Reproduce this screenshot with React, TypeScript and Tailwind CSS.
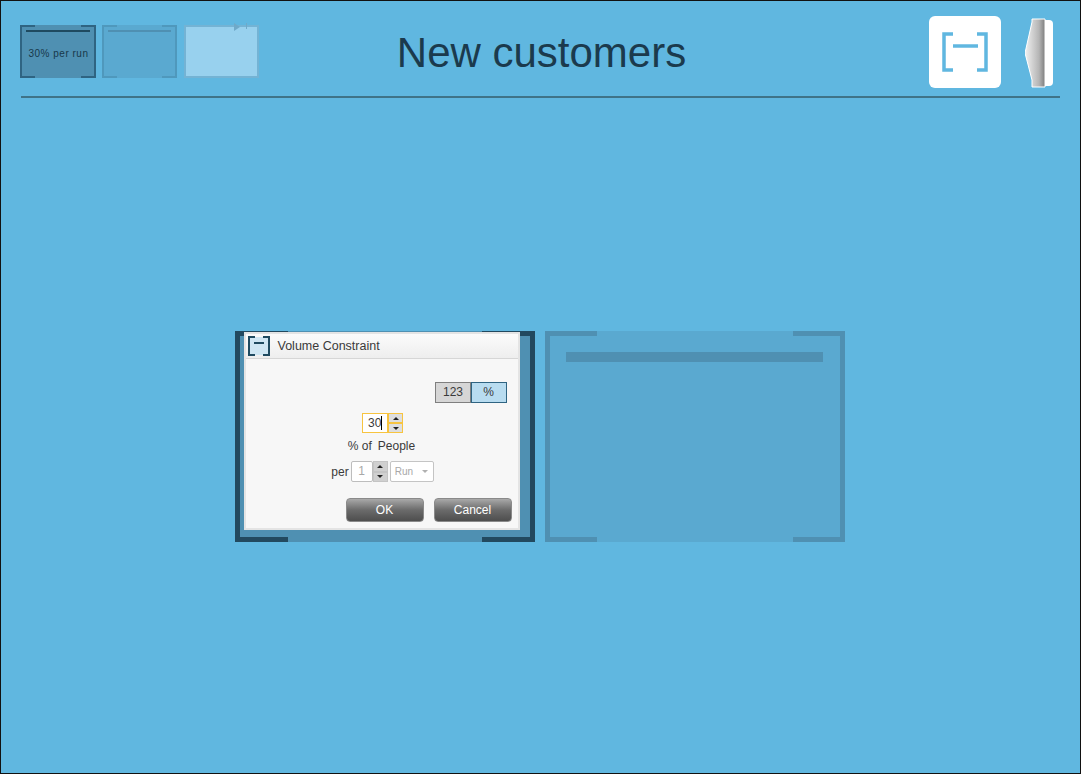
const sans = { fontFamily: '"Liberation Sans", Arial, sans-serif' };

function Bracket({ bar, sideW, cornerW, barClass }: { bar: string; sideW: string; cornerW: string; barClass: string }) {
  return (
    <>
      <div className={`absolute left-0 top-0 ${cornerW} ${sideW} ${bar}`} />
      <div className={`absolute right-0 top-0 ${cornerW} ${sideW} ${bar}`} />
      <div className={`absolute left-0 bottom-0 ${cornerW} ${sideW} ${bar}`} />
      <div className={`absolute right-0 bottom-0 ${cornerW} ${sideW} ${bar}`} />
      <div className={barClass} />
    </>
  );
}

function Thumb({ active }: { active?: boolean }) {
  return (
    <div
      className={`relative h-[53px] border-x-2 ${
        active ? 'w-[76px] bg-[#4f90b2] border-[#2f6482]' : 'w-[75px] bg-[#5aa9d0] border-[#4f98bc]'
      }`}
    >
      <Bracket
        bar={active ? 'bg-[#2f6482]' : 'bg-[#4f98bc]'}
        sideW="h-[2px]"
        cornerW="w-[13px]"
        barClass={`mx-[4px] mt-[5px] h-[2px] ${active ? 'bg-[#1f4a60]' : 'bg-[#4f90b2]'}`}
      />
      {active && (
        <div className="mt-[16px] pl-[1px] text-center text-[10px] tracking-[0.5px] leading-[12px] text-[#17384a]" style={sans}>
          30% per run
        </div>
      )}
    </div>
  );
}

function Spinner({ height, gold }: { height: string; gold?: boolean }) {
  const cls = `flex-1 flex items-center justify-center ${gold ? 'bg-[#dedede] border border-[#f7c440]' : 'bg-[#d0d0d0] border border-[#c4c4c4]'}`;
  return (
    <div className={`flex flex-col w-[15px] ${height}`}>
      <div className={cls}>
        <div className="w-0 h-0 border-x-[3px] border-x-transparent border-b-[3px] border-b-[#222]" />
      </div>
      <div className={cls}>
        <div className="w-0 h-0 border-x-[3px] border-x-transparent border-t-[3px] border-t-[#222]" />
      </div>
    </div>
  );
}

function DialogButton({ label }: { label: string }) {
  return (
    <button className="w-[78px] h-[24px] rounded-[4px] border border-[#8a8a8a] bg-gradient-to-b from-[#a9a9a9] via-[#6b6b6b] to-[#4e4e4e] text-white text-[12px] leading-[20px]" style={sans}>
      {label}
    </button>
  );
}

function VolumeDialog() {
  return (
    <div className="absolute left-[9px] top-[1px] w-[276px] h-[198px] bg-[#f7f7f7] border-2 border-[#e4e4e4] flex flex-col text-[#3a3a3a]" style={sans}>
      <div className="h-[25px] flex items-center border-b border-[#d6d6d6] bg-gradient-to-b from-[#fbfbfb] to-[#eeeeee]">
        <svg width="24" height="22" viewBox="0 0 24 22" className="ml-[1px]">
          <rect x="3" y="2" width="18" height="18" fill="#cfe6f3" />
          <path d="M8 2H2V20H8M16 2H22V20H16" fill="none" stroke="#1f4a60" strokeWidth="2" />
          <path d="M7 8H17" stroke="#1f4a60" strokeWidth="2" />
        </svg>
        <span className="ml-[7px] text-[12.5px] leading-none">Volume Constraint</span>
      </div>
      <div className="flex justify-end mt-[23px] pr-[11px]">
        <div className="w-[36px] h-[21px] pl-[1px] bg-[#d6d6d6] border border-[#7f7f7f] text-[12px] leading-[19px] text-center">123</div>
        <div className="w-[36px] h-[21px] bg-[#b8dcf0] border border-[#2f6482] text-[12px] leading-[19px] text-center">%</div>
      </div>
      <div className="flex justify-center mt-[10px] pl-[2px]">
        <div className="w-[26px] h-[20px] bg-white border border-[#f7c440] text-[12px] leading-[18px] pl-[5px] flex items-center">
          30<span className="w-px h-[14px] bg-black" />
        </div>
        <Spinner height="h-[20px]" gold />
      </div>
      <div className="mt-[5px] flex justify-center gap-[6px] text-[12px] leading-[16px]">
        <span>% of</span>
        <span>People</span>
      </div>
      <div className="flex justify-center items-center mt-[7px] pl-[2px]">
        <span className="text-[12px] mr-[2px]">per</span>
        <div className="w-[22px] h-[21px] bg-white border border-[#bdbdbd] rounded-[2px] text-[12px] text-[#a8a8a8] text-center leading-[19px]">1</div>
        <Spinner height="h-[21px]" />
        <div className="ml-[2px] w-[44px] h-[21px] bg-white border border-[#c4c4c4] rounded-[2px] flex items-center pl-[4px] gap-[9px] text-[10px] text-[#a8a8a8]">
          Run
          <div className="w-0 h-0 border-x-[3px] border-x-transparent border-t-[3px] border-t-[#b0b0b0]" />
        </div>
      </div>
      <div className="flex justify-end gap-[10px] mt-[16px] pr-[6px]">
        <DialogButton label="OK" />
        <DialogButton label="Cancel" />
      </div>
    </div>
  );
}

export default function App() {
  return (
    <div className="w-[1081px] h-[774px] border border-[#111] bg-[#60b7e0] flex flex-col overflow-hidden" style={sans}>
      <header className="mx-[20px] h-[97px] border-b-2 border-[#3f7388] flex items-start relative">
        <div className="flex gap-[6px] mt-[24px] -ml-px w-[239px] shrink-0">
          <Thumb active />
          <Thumb />
          <div className="relative ml-[1px] w-[75px] h-[53px] bg-[#98d1ee] border-2 border-[#74b3d4]">
            <div className="absolute right-[17px] top-[-4px] w-0 h-0 border-y-[4px] border-y-transparent border-l-[6px] border-l-[#6fa9c8]" />
            <div className="absolute right-[10px] top-[-4px] w-px h-[6px] bg-[#6fa9c8]" />
          </div>
        </div>
        <h1 className="flex-1 text-center text-[42px] leading-none mt-[31px] pr-[236px] text-[#1b3a4d]">New customers</h1>
        <div className="absolute right-[59px] top-[15px] w-[72px] h-[72px] bg-white rounded-[6px] flex items-center justify-center">
          <svg width="46" height="40" viewBox="0 0 46 40">
            <path d="M11 2H2V38H11M35 2H44V38H35" fill="none" stroke="#60b7e0" strokeWidth="3.5" />
            <path d="M11 14H36" stroke="#60b7e0" strokeWidth="3.5" />
          </svg>
        </div>
        <svg width="28" height="70" viewBox="0 0 28 70" className="absolute right-[7px] top-[17px]">
          <defs>
            <linearGradient id="flap" x1="0" x2="1" y1="0" y2="0">
              <stop offset="0" stopColor="#f2f2f2" />
              <stop offset="0.7" stopColor="#b5b5b5" />
              <stop offset="1" stopColor="#7d7d7d" />
            </linearGradient>
          </defs>
          <rect x="14" y="2" width="14" height="66" rx="4" fill="#fff" />
          <path d="M7 1H20V69H7V62L0 35L7 4Z" fill="url(#flap)" stroke="#fff" strokeWidth="1" />
        </svg>
      </header>
      <main className="flex-1 flex items-start justify-center gap-[10px] pt-[233px] pr-[2px]">
        <div className="relative w-[300px] h-[211px] bg-[#4f90b2] border-x-[5px] border-[#22495f]">
          <Bracket bar="bg-[#22495f]" sideW="h-[5px]" cornerW="w-[48px]" barClass="" />
          <div className="absolute -left-[5px] top-0 w-[300px] h-[211px]">
            <VolumeDialog />
          </div>
        </div>
        <div className="relative w-[300px] h-[211px] bg-[#5aa9d0] border-x-[5px] border-[#4f90b2]">
          <Bracket
            bar="bg-[#4f90b2]"
            sideW="h-[5px]"
            cornerW="w-[47px]"
            barClass="ml-[16px] mr-[17px] mt-[21px] h-[10px] bg-[#4f90b2]"
          />
        </div>
      </main>
    </div>
  );
}
